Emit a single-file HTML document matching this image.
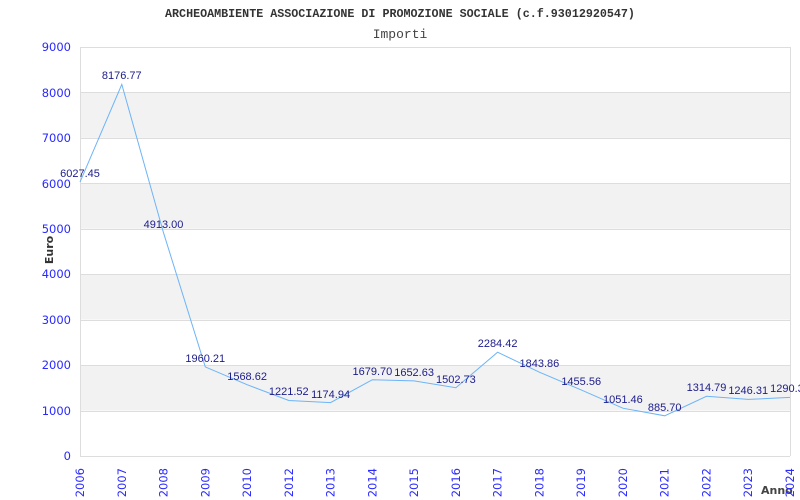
<!DOCTYPE html>
<html><head><meta charset="utf-8"><style>html,body{margin:0;padding:0;background:#fff}svg{display:block}</style></head><body>
<svg width="800" height="500" viewBox="0 0 800 500" xmlns="http://www.w3.org/2000/svg">
<rect width="800" height="500" fill="#fff"/>
<g fill="#f2f2f2">
<rect x="80" y="92.4" width="710" height="45.4"/>
<rect x="80" y="183.3" width="710" height="45.4"/>
<rect x="80" y="274.2" width="710" height="45.4"/>
<rect x="80" y="365.1" width="710" height="45.4"/>
</g>
<g stroke="#dddddd" stroke-width="1">
<line x1="80" y1="47.5" x2="790" y2="47.5"/>
<line x1="80" y1="92.5" x2="790" y2="92.5"/>
<line x1="80" y1="138.5" x2="790" y2="138.5"/>
<line x1="80" y1="183.5" x2="790" y2="183.5"/>
<line x1="80" y1="229.5" x2="790" y2="229.5"/>
<line x1="80" y1="274.5" x2="790" y2="274.5"/>
<line x1="80" y1="320.5" x2="790" y2="320.5"/>
<line x1="80" y1="365.5" x2="790" y2="365.5"/>
<line x1="80" y1="411.5" x2="790" y2="411.5"/>
<line x1="80.5" y1="47" x2="80.5" y2="456"/>
<line x1="790.5" y1="47" x2="790.5" y2="456"/>
<line x1="80" y1="456.5" x2="790" y2="456.5"/>
</g>
<text x="400" y="17" text-anchor="middle" font-family="Liberation Mono, monospace" font-weight="bold" font-size="11.7" fill="#333">ARCHEOAMBIENTE ASSOCIAZIONE DI PROMOZIONE SOCIALE (c.f.93012920547)</text>
<text x="400" y="38" text-anchor="middle" font-family="Liberation Mono, monospace" font-size="13" fill="#444">Importi</text>
<g font-family="DejaVu Sans, sans-serif" font-size="11.5" fill="#2a2aff" text-anchor="end">
<text x="71" y="51">9000</text><text x="71" y="97">8000</text><text x="71" y="142">7000</text>
<text x="71" y="188">6000</text><text x="71" y="233">5000</text><text x="71" y="278">4000</text>
<text x="71" y="324">3000</text><text x="71" y="369">2000</text><text x="71" y="415">1000</text>
<text x="71" y="460">0</text>
</g>
<text transform="translate(53,250) rotate(-90)" text-anchor="middle" font-family="DejaVu Sans, sans-serif" font-weight="bold" font-size="11" fill="#333">Euro</text>
<text x="761" y="494" font-family="DejaVu Sans, sans-serif" font-weight="bold" font-size="11" fill="#444">Anno</text>
<g font-family="DejaVu Sans, sans-serif" font-size="11.5" fill="#2a2aff" text-anchor="end">
<text transform="translate(84,468) rotate(-90)">2006</text>
<text transform="translate(126,468) rotate(-90)">2007</text>
<text transform="translate(167.5,468) rotate(-90)">2008</text>
<text transform="translate(209.3,468) rotate(-90)">2009</text>
<text transform="translate(251.1,468) rotate(-90)">2010</text>
<text transform="translate(292.8,468) rotate(-90)">2012</text>
<text transform="translate(334.6,468) rotate(-90)">2013</text>
<text transform="translate(376.4,468) rotate(-90)">2014</text>
<text transform="translate(418.1,468) rotate(-90)">2015</text>
<text transform="translate(459.9,468) rotate(-90)">2016</text>
<text transform="translate(501.6,468) rotate(-90)">2017</text>
<text transform="translate(543.4,468) rotate(-90)">2018</text>
<text transform="translate(585.2,468) rotate(-90)">2019</text>
<text transform="translate(626.9,468) rotate(-90)">2020</text>
<text transform="translate(668.7,468) rotate(-90)">2021</text>
<text transform="translate(710.5,468) rotate(-90)">2022</text>
<text transform="translate(752.2,468) rotate(-90)">2023</text>
<text transform="translate(794,468) rotate(-90)">2024</text>
</g>
<polyline fill="none" stroke="#6cb4f8" stroke-width="1" points="80,182.1 121.8,84.4 163.5,232.7 205.3,366.9 247.1,384.7 288.8,400.5 330.6,402.6 372.4,379.7 414.1,380.9 455.9,387.7 497.6,352.2 539.4,372.2 581.2,389.9 622.9,408.2 664.7,415.8 706.5,396.3 748.2,399.4 790,397.4"/>
<g font-family="Liberation Sans, sans-serif" font-size="11" fill="#1c1c8a" text-anchor="middle">
<text x="80" y="177">6027.45</text>
<text x="121.8" y="79">8176.77</text>
<text x="163.5" y="228">4913.00</text>
<text x="205.3" y="362">1960.21</text>
<text x="247.1" y="380">1568.62</text>
<text x="288.8" y="395">1221.52</text>
<text x="330.6" y="398">1174.94</text>
<text x="372.4" y="375">1679.70</text>
<text x="414.1" y="376">1652.63</text>
<text x="455.9" y="383">1502.73</text>
<text x="497.6" y="347">2284.42</text>
<text x="539.4" y="367">1843.86</text>
<text x="581.2" y="385">1455.56</text>
<text x="622.9" y="403">1051.46</text>
<text x="664.7" y="411">885.70</text>
<text x="706.5" y="391">1314.79</text>
<text x="748.2" y="394">1246.31</text>
<text x="790" y="392">1290.30</text>
</g>
</svg>
</body></html>
